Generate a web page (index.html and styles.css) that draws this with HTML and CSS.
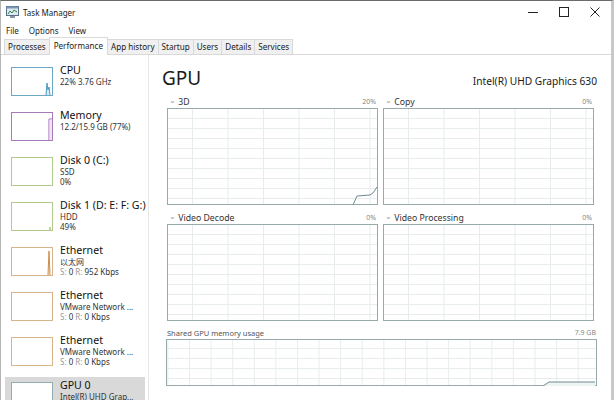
FILE: index.html
```html
<!DOCTYPE html>
<html lang="en">
<head>
    <meta charset="UTF-8">
    <meta name="viewport" content="width=device-width, initial-scale=1.0">
    <title>Task Manager</title>
    <link rel="stylesheet" href="styles.css">
</head>
<body>
    <div class="window">
        <div class="titlebar">
            <svg class="app-icon" width="13" height="12" viewBox="0 0 13 12">
                <rect x="0.5" y="0.5" width="12" height="9" fill="#dfe9f3" stroke="#5a6f86"/>
                <rect x="0.5" y="0.5" width="12" height="2" fill="#7a95b3"/>
                <polyline points="2,8 4,5 6,7 8,4 11,6" fill="none" stroke="#2f8a3c" stroke-width="1"/>
                <rect x="4" y="10" width="5" height="2" fill="#8a96a3"/>
            </svg>
            <span class="title">Task Manager</span>
            <div class="controls">
                <svg width="10" height="10" viewBox="0 0 10 10"><line x1="0" y1="5.5" x2="10" y2="5.5" stroke="#222"/></svg>
                <svg width="10" height="10" viewBox="0 0 10 10"><rect x="0.5" y="0.5" width="9" height="9" fill="none" stroke="#222"/></svg>
                <svg width="10" height="10" viewBox="0 0 10 10"><path d="M0.5 0.5 L9.5 9.5 M9.5 0.5 L0.5 9.5" stroke="#222"/></svg>
            </div>
        </div>

        <div class="menubar">
            <span>File</span>
            <span>Options</span>
            <span>View</span>
        </div>

        <div class="tabs">
            <div class="tab">Processes</div>
            <div class="tab active">Performance</div>
            <div class="tab">App history</div>
            <div class="tab">Startup</div>
            <div class="tab">Users</div>
            <div class="tab">Details</div>
            <div class="tab">Services</div>
        </div>

        <div class="content">
            <div class="sidebar">
                <div class="item">
                    <div class="thumb cpu">
                        <svg width="40" height="27" viewBox="0 0 40 27"><polyline points="34,27 35,15 36,22 37,19 38,27" fill="#d7ebf4" stroke="#4a9bc0"/></svg>
                    </div>
                    <div class="info">
                        <div class="name">CPU</div>
                        <div class="sub">22% 3.76 GHz</div>
                    </div>
                </div>
                <div class="item">
                    <div class="thumb mem">
                        <svg width="40" height="27" viewBox="0 0 40 27"><polyline points="37,27 37,6 40,6" fill="none" stroke="#9b5fae"/><rect x="37.5" y="6.5" width="3" height="21" fill="#f1e4f4"/></svg>
                    </div>
                    <div class="info">
                        <div class="name">Memory</div>
                        <div class="sub">12.2/15.9 GB (77%)</div>
                    </div>
                </div>
                <div class="item">
                    <div class="thumb disk"></div>
                    <div class="info">
                        <div class="name">Disk 0 (C:)</div>
                        <div class="sub">SSD</div>
                        <div class="sub">0%</div>
                    </div>
                </div>
                <div class="item">
                    <div class="thumb disk">
                        <svg width="40" height="27" viewBox="0 0 40 27"><line x1="38" y1="27" x2="38" y2="24" stroke="#8aab4a"/></svg>
                    </div>
                    <div class="info">
                        <div class="name">Disk 1 (D: E: F: G:)</div>
                        <div class="sub">HDD</div>
                        <div class="sub">49%</div>
                    </div>
                </div>
                <div class="item">
                    <div class="thumb eth">
                        <svg width="40" height="27" viewBox="0 0 40 27"><polyline points="36,27 37,3 38,27" fill="#f5e6d2" stroke="#c9904e"/></svg>
                    </div>
                    <div class="info">
                        <div class="name">Ethernet</div>
                        <div class="sub">以太网</div>
                        <div class="sub"><span class="dim">S:</span> 0 <span class="dim">R:</span> 952 Kbps</div>
                    </div>
                </div>
                <div class="item">
                    <div class="thumb eth"></div>
                    <div class="info">
                        <div class="name">Ethernet</div>
                        <div class="sub">VMware Network ...</div>
                        <div class="sub"><span class="dim">S:</span> 0 <span class="dim">R:</span> 0 Kbps</div>
                    </div>
                </div>
                <div class="item">
                    <div class="thumb eth"></div>
                    <div class="info">
                        <div class="name">Ethernet</div>
                        <div class="sub">VMware Network ...</div>
                        <div class="sub"><span class="dim">S:</span> 0 <span class="dim">R:</span> 0 Kbps</div>
                    </div>
                </div>
                <div class="item selected">
                    <div class="thumb gpu"></div>
                    <div class="info">
                        <div class="name">GPU 0</div>
                        <div class="sub">Intel(R) UHD Grap...</div>
                    </div>
                </div>
            </div>

            <div class="main">
                <div class="header">
                    <div class="heading">GPU</div>
                    <div class="model">Intel(R) UHD Graphics 630</div>
                </div>

                <div class="graphs">
                    <div class="graph">
                        <div class="label"><span><span class="chev">&#8964;</span> 3D</span><span class="pct">20%</span></div>
                        <div class="chart">
                            <svg class="line" width="210" height="96" viewBox="0 0 210 96"><polyline points="185,96 189,87 202,86 205,84 209,78" fill="none" stroke="#6c8c90" stroke-width="1"/></svg>
                        </div>
                    </div>
                    <div class="graph">
                        <div class="label"><span><span class="chev">&#8964;</span> Copy</span><span class="pct">0%</span></div>
                        <div class="chart"></div>
                    </div>
                    <div class="graph">
                        <div class="label"><span><span class="chev">&#8964;</span> Video Decode</span><span class="pct">0%</span></div>
                        <div class="chart"></div>
                    </div>
                    <div class="graph">
                        <div class="label"><span><span class="chev">&#8964;</span> Video Processing</span><span class="pct">0%</span></div>
                        <div class="chart"></div>
                    </div>
                </div>

                <div class="shared">
                    <div class="label small"><span>Shared GPU memory usage</span><span class="pct">7.9 GB</span></div>
                    <div class="chart wide">
                        <svg class="line" width="428" height="46" viewBox="0 0 428 46"><polygon points="376,46 382,42 428,42 428,46" fill="#eef3f3"/><polyline points="376,46 382,42 428,42" fill="none" stroke="#6c8c90" stroke-width="1"/></svg>
                    </div>
                </div>
            </div>
        </div>
    </div>
</body>
</html>
```

FILE: styles.css
```css
* {
    box-sizing: border-box;
}
body {
    margin: 0;
    font-family: "Noto Sans", "Noto Sans CJK SC", sans-serif;
    background: #fff;
    color: #1a1a1a;
}
.window {
    width: 614px;
    height: 400px;
    overflow: hidden;
    background: #fff;
    border-top: 1px solid #6b6b6b;
    border-right: 3px solid #c8c8c8;
    border-left: 1px solid #b5b5b5;
    display: flex;
    flex-direction: column;
}
.titlebar {
    height: 22px;
    display: flex;
    align-items: center;
    padding-left: 5px;
    font-size: 8px;
}
.app-icon {
    margin-right: 4px;
}
.controls {
    margin-left: auto;
    display: flex;
    gap: 21px;
    padding-right: 11px;
}
.menubar {
    height: 15px;
    display: flex;
    align-items: center;
    gap: 10px;
    padding-left: 5px;
    font-size: 8px;
}
.tabs {
    height: 17px;
    display: flex;
    align-items: flex-end;
    padding-left: 3px;
    border-bottom: 1px solid #d9d9d9;
}
.tab {
    height: 15px;
    padding: 0 3px;
    font-size: 8.1px;
    line-height: 14px;
    background: #f0f0f0;
    border: 1px solid #d9d9d9;
    border-bottom: none;
    margin-right: -1px;
}
.tab.active {
    height: 18px;
    background: #fff;
    line-height: 15px;
    position: relative;
    top: 1px;
    z-index: 1;
    padding: 0 4px;
}
.content {
    flex: 1;
    display: flex;
    min-height: 0;
}
.sidebar {
    width: 148px;
    border-right: 1px solid #e6e6e6;
    padding: 7px 3px 0 4px;
    display: flex;
    flex-direction: column;
    gap: 3px;
}
.item {
    height: 42px;
    display: flex;
    align-items: flex-start;
    padding: 3px 0 0 6px;
    flex-shrink: 0;
}
.item.selected {
    background: #d9d9d9;
}
.thumb {
    width: 42px;
    height: 29px;
    border: 1px solid #999;
    background: #fff;
    margin-top: 2px;
    margin-right: 7px;
    flex-shrink: 0;
    display: flex;
}
.thumb.cpu { border-color: #6aa8c4; }
.thumb.mem { border-color: #a77bb8; }
.thumb.disk { border-color: #b2c98c; }
.thumb.eth { border-color: #d8b48a; }
.thumb.gpu { border-color: #94aeb0; }
.info {
    line-height: 1.1;
}
.name {
    font-size: 10.6px;
    color: #111;
    white-space: nowrap;
}
.sub {
    font-size: 8px;
    color: #333;
    white-space: nowrap;
    line-height: 10px;
}
.dim {
    color: #999;
}
.main {
    flex: 1;
    padding: 6px 14px 0 13px;
}
.header {
    display: flex;
    justify-content: space-between;
    align-items: center;
    height: 34px;
}
.heading {
    font-size: 19px;
    font-weight: 400;
}
.model {
    font-size: 10.2px;
    padding-top: 5px;
}
.graphs {
    display: grid;
    grid-template-columns: 211px 211px;
    column-gap: 5px;
    row-gap: 6px;
    padding-left: 5px;
}
.label {
    height: 13px;
    display: flex;
    justify-content: space-between;
    align-items: center;
    font-size: 8.7px;
    color: #333;
    padding: 0 2px 0 2px;
}
.chev {
    color: #999;
    font-size: 8px;
    position: relative;
    top: -2px;
}
.pct {
    font-size: 7px;
    color: #888;
}
.chart {
    position: relative;
    height: 97px;
    border: 1px solid #97a9aa;
    background-color: #fff;
    background-image:
        linear-gradient(to right, #e7eded 1px, transparent 1px),
        linear-gradient(to bottom, #e7eded 1px, transparent 1px);
    background-size: 35.5px 10px;
    background-position: 24px 0, 0 9px;
}
.line {
    position: absolute;
    left: 0;
    top: 0;
}
.shared {
    padding-top: 5px;
    padding-left: 4px;
}
.label.small {
    font-size: 7.5px;
    color: #555;
    height: 13px;
    padding: 0 1px;
}
.chart.wide {
    height: 47px;
    background-size: 21.6px 10px;
    background-position: 22px 0, 0 8px;
}
```
